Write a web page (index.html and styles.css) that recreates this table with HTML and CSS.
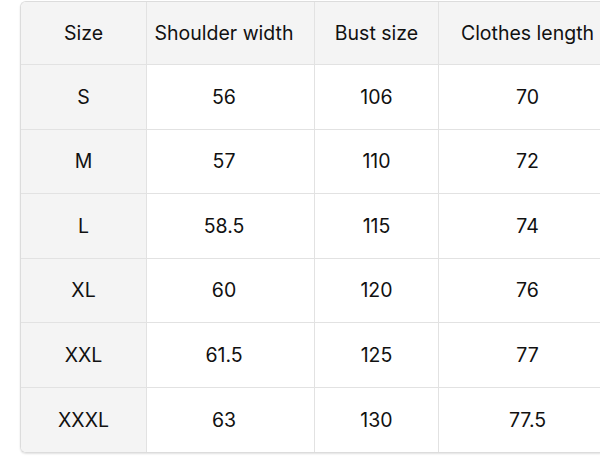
FILE: index.html
```html
<!DOCTYPE html>
<html>
<head>
<meta charset="utf-8">
<link rel="stylesheet" href="styles.css">
</head>
<body>
<div class="wrap">
  <div class="grid">
    <div class="cell head side">Size</div>
    <div class="cell head c2">Shoulder width</div>
    <div class="cell head">Bust size</div>
    <div class="cell head last">Clothes length</div>

    <div class="cell side">S</div>
    <div class="cell c2">56</div>
    <div class="cell">106</div>
    <div class="cell last">70</div>

    <div class="cell side">M</div>
    <div class="cell c2">57</div>
    <div class="cell">110</div>
    <div class="cell last">72</div>

    <div class="cell side">L</div>
    <div class="cell c2">58.5</div>
    <div class="cell">115</div>
    <div class="cell last">74</div>

    <div class="cell side">XL</div>
    <div class="cell c2">60</div>
    <div class="cell">120</div>
    <div class="cell last">76</div>

    <div class="cell side">XXL</div>
    <div class="cell c2">61.5</div>
    <div class="cell">125</div>
    <div class="cell last">77</div>

    <div class="cell side bottom">XXXL</div>
    <div class="cell c2 bottom">63</div>
    <div class="cell bottom">130</div>
    <div class="cell last bottom">77.5</div>
  </div>
</div>
</body>
</html>
```

FILE: styles.css
```css
html, body {
  margin: 0;
  padding: 0;
  background: #ffffff;
  overflow: hidden;
  width: 600px;
  height: 458px;
}
body {
  font-family: Inter, "Liberation Sans", sans-serif;
  color: #111111;
}
.wrap {
  margin: 1px 0 0 20px;
  width: 580px;
  border: 1px solid #dcdcdc;
  border-right: none;
  border-radius: 6px 0 0 6px;
  overflow: hidden;
  box-shadow: 0 1px 2px rgba(0, 0, 0, 0.12);
}
.grid {
  display: grid;
  grid-template-columns: 126px 168px 124px 1fr;
  grid-template-rows: 63px repeat(6, 64.5px);
}
.cell {
  display: flex;
  align-items: center;
  justify-content: center;
  font-size: 19.5px;
  white-space: nowrap;
  border-right: 1px solid #e2e2e2;
  border-bottom: 1px solid #e2e2e2;
  background: #ffffff;
}
.c2 {
  padding-right: 13px;
}
.cell.last {
  border-right: none;
  padding-left: 15px;
}
.head, .side {
  background: #f4f4f4;
}
.bottom {
  border-bottom: none;
}
```
